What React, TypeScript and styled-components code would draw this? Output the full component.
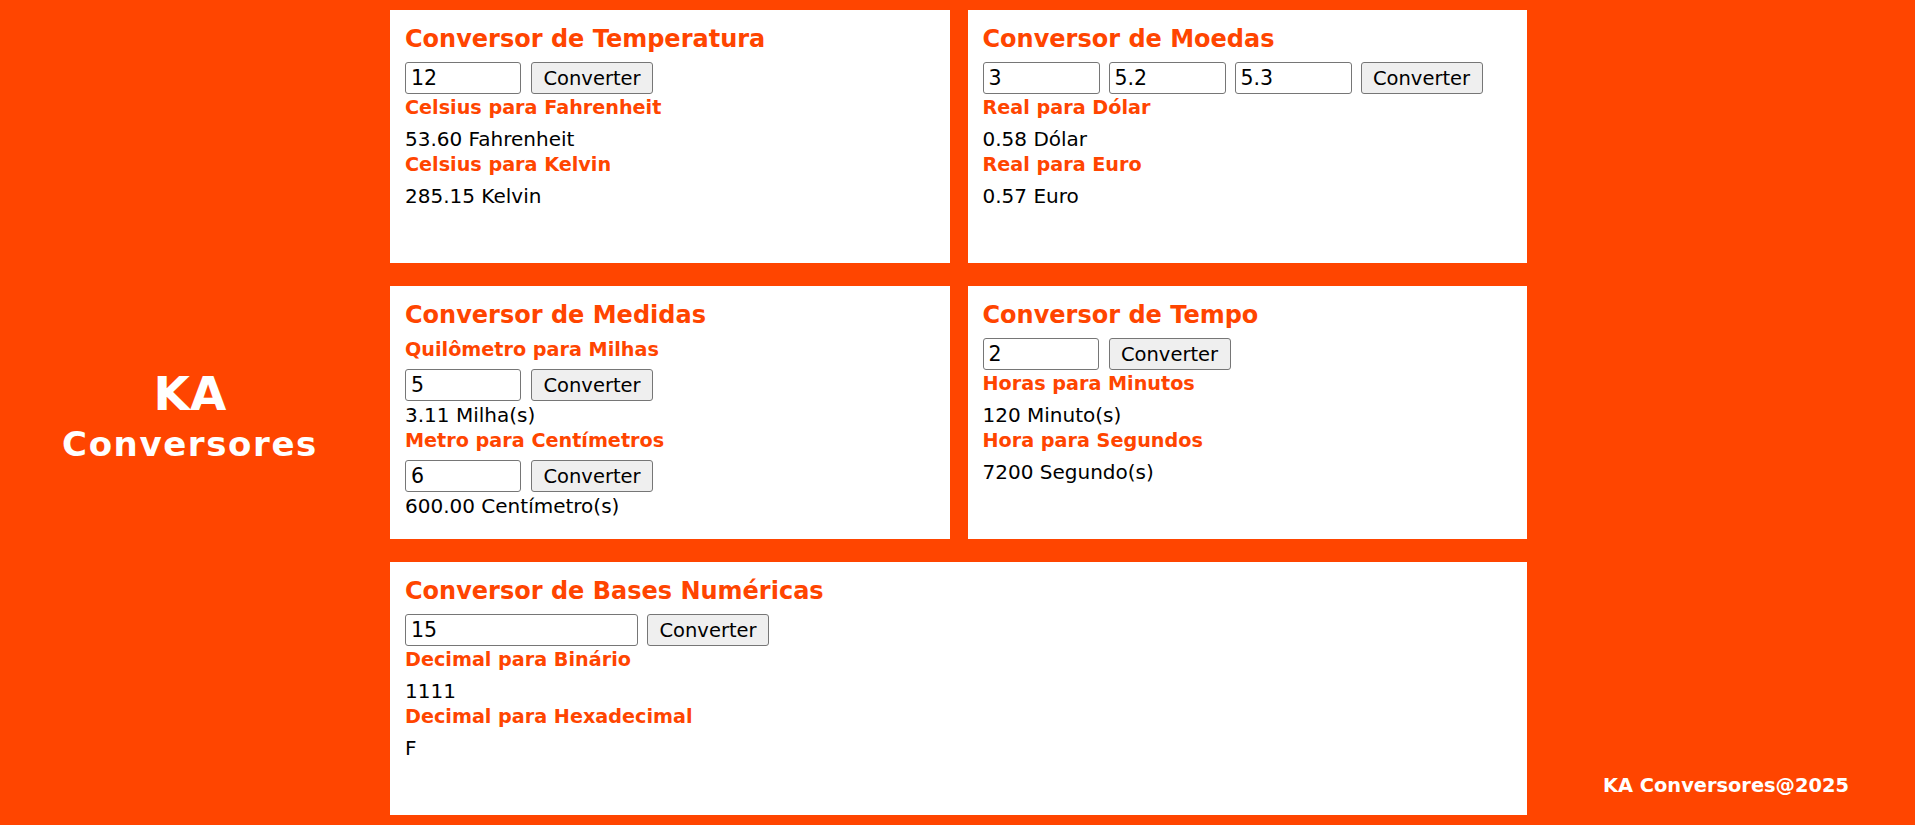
import React, {useState} from 'react';
import styled, {createGlobalStyle} from "styled-components";

const GlobalStyle = createGlobalStyle`
  html, body {
    margin: 0;
    padding: 0;
    background-color: #ff4500;
    font-family: "DejaVu Sans", Verdana, sans-serif;
  }
`

const Page = styled.div`
  display: grid;
  grid-template-columns: 380px 1137px 1fr;
  column-gap: 10px;
  height: 825px;
`

const Aside = styled.aside`
  display: flex;
  flex-direction: column;
  align-items: center;
  justify-content: center;
  padding-top: 4px;
  color: #fff;
  font-weight: bold;
`

const BrandTop = styled.div`
  font-size: 47px;
`

const BrandBottom = styled.div`
  font-size: 34px;
  letter-spacing: 1.6px;
  margin-top: 3px;
`

const Main = styled.main`
  display: grid;
  grid-template-columns: 1fr 1fr;
  grid-template-rows: 253px 253px 253px;
  column-gap: 18px;
  row-gap: 23px;
  padding-top: 10px;
`

const Card = styled.section<{ $wide?: boolean }>`
  background-color: #fff;
  padding: 15px 15px;
  box-sizing: border-box;
  grid-column: ${props => props.$wide ? '1 / span 2' : 'auto'};
`

const Title = styled.h2`
  color: #ff4500;
  font-size: 24px;
  margin: 0 0 9px;
`

const Label = styled.h3`
  color: #ff4500;
  font-size: 19.2px;
  margin: 0 0 8px;
`

const Result = styled.p`
  font-size: 20px;
  margin: 0 0 2px;
  color: #000;
`

const Row = styled.div<{ $gap?: number }>`
  display: flex;
  gap: ${props => props.$gap ?? 10}px;
  margin: 1px 0 2px;
`

const Input = styled.input<{ $width?: number }>`
  width: ${props => props.$width ?? 116}px;
  height: 32px;
  box-sizing: border-box;
  border: 1px solid #767676;
  border-radius: 3px;
  padding: 0 5px;
  font-family: "DejaVu Sans", Verdana, sans-serif;
  font-size: 20.5px;
  color: #000;
`

const Button = styled.button`
  width: 122px;
  height: 32px;
  box-sizing: border-box;
  border: 1px solid #767676;
  border-radius: 3px;
  background-color: #efefef;
  font-family: "DejaVu Sans", Verdana, sans-serif;
  font-size: 19.5px;
  color: #000;
  padding: 0;
  cursor: pointer;
`

const FooterCol = styled.footer`
  display: flex;
  align-items: flex-end;
  justify-content: center;
  padding-bottom: 28px;
  color: #fff;
  font-weight: bold;
  font-size: 19.4px;
`

const Temperatura = () => {
    const [celsius, setCelsius] = useState('12')
    const [res, setRes] = useState({f: 53.6, k: 285.15})

    const onConvert = () => {
        const c = parseFloat(celsius) || 0
        setRes({f: c * 9 / 5 + 32, k: c + 273.15})
    }

    return (
        <Card>
            <Title>Conversor de Temperatura</Title>
            <Row>
                <Input value={celsius} onChange={e => setCelsius(e.target.value)}/>
                <Button onClick={onConvert}>Converter</Button>
            </Row>
            <Label>Celsius para Fahrenheit</Label>
            <Result>{res.f.toFixed(2)} Fahrenheit</Result>
            <Label>Celsius para Kelvin</Label>
            <Result>{res.k.toFixed(2)} Kelvin</Result>
        </Card>
    )
}

const Moedas = () => {
    const [real, setReal] = useState('3')
    const [dolar, setDolar] = useState('5.2')
    const [euro, setEuro] = useState('5.3')
    const [res, setRes] = useState({d: 3 / 5.2, e: 3 / 5.3})

    const onConvert = () => {
        const r = parseFloat(real) || 0
        setRes({d: r / (parseFloat(dolar) || 1), e: r / (parseFloat(euro) || 1)})
    }

    return (
        <Card>
            <Title>Conversor de Moedas</Title>
            <Row $gap={9}>
                <Input $width={117} value={real} onChange={e => setReal(e.target.value)}/>
                <Input $width={117} value={dolar} onChange={e => setDolar(e.target.value)}/>
                <Input $width={117} value={euro} onChange={e => setEuro(e.target.value)}/>
                <Button onClick={onConvert}>Converter</Button>
            </Row>
            <Label>Real para Dólar</Label>
            <Result>{res.d.toFixed(2)} Dólar</Result>
            <Label>Real para Euro</Label>
            <Result>{res.e.toFixed(2)} Euro</Result>
        </Card>
    )
}

const Medidas = () => {
    const [km, setKm] = useState('5')
    const [m, setM] = useState('6')
    const [milhas, setMilhas] = useState(5 * 0.621371)
    const [cm, setCm] = useState(600)

    return (
        <Card>
            <Title>Conversor de Medidas</Title>
            <Label>Quilômetro para Milhas</Label>
            <Row>
                <Input value={km} onChange={e => setKm(e.target.value)}/>
                <Button onClick={() => setMilhas((parseFloat(km) || 0) * 0.621371)}>Converter</Button>
            </Row>
            <Result>{milhas.toFixed(2)} Milha(s)</Result>
            <Label>Metro para Centímetros</Label>
            <Row>
                <Input value={m} onChange={e => setM(e.target.value)}/>
                <Button onClick={() => setCm((parseFloat(m) || 0) * 100)}>Converter</Button>
            </Row>
            <Result>{cm.toFixed(2)} Centímetro(s)</Result>
        </Card>
    )
}

const Tempo = () => {
    const [horas, setHoras] = useState('2')
    const [h, setH] = useState(2)

    return (
        <Card>
            <Title>Conversor de Tempo</Title>
            <Row>
                <Input value={horas} onChange={e => setHoras(e.target.value)}/>
                <Button onClick={() => setH(parseFloat(horas) || 0)}>Converter</Button>
            </Row>
            <Label>Horas para Minutos</Label>
            <Result>{h * 60} Minuto(s)</Result>
            <Label>Hora para Segundos</Label>
            <Result>{h * 3600} Segundo(s)</Result>
        </Card>
    )
}

const Bases = () => {
    const [dec, setDec] = useState('15')
    const [n, setN] = useState(15)

    return (
        <Card $wide>
            <Title>Conversor de Bases Numéricas</Title>
            <Row $gap={9}>
                <Input $width={233} value={dec} onChange={e => setDec(e.target.value)}/>
                <Button onClick={() => setN(parseInt(dec) || 0)}>Converter</Button>
            </Row>
            <Label>Decimal para Binário</Label>
            <Result>{n.toString(2)}</Result>
            <Label>Decimal para Hexadecimal</Label>
            <Result>{n.toString(16).toUpperCase()}</Result>
        </Card>
    )
}

export default function App() {
    return (
        <>
            <GlobalStyle/>
            <Page>
                <Aside>
                    <BrandTop>KA</BrandTop>
                    <BrandBottom>Conversores</BrandBottom>
                </Aside>
                <Main>
                    <Temperatura/>
                    <Moedas/>
                    <Medidas/>
                    <Tempo/>
                    <Bases/>
                </Main>
                <FooterCol>KA Conversores@2025</FooterCol>
            </Page>
        </>
    )
}
